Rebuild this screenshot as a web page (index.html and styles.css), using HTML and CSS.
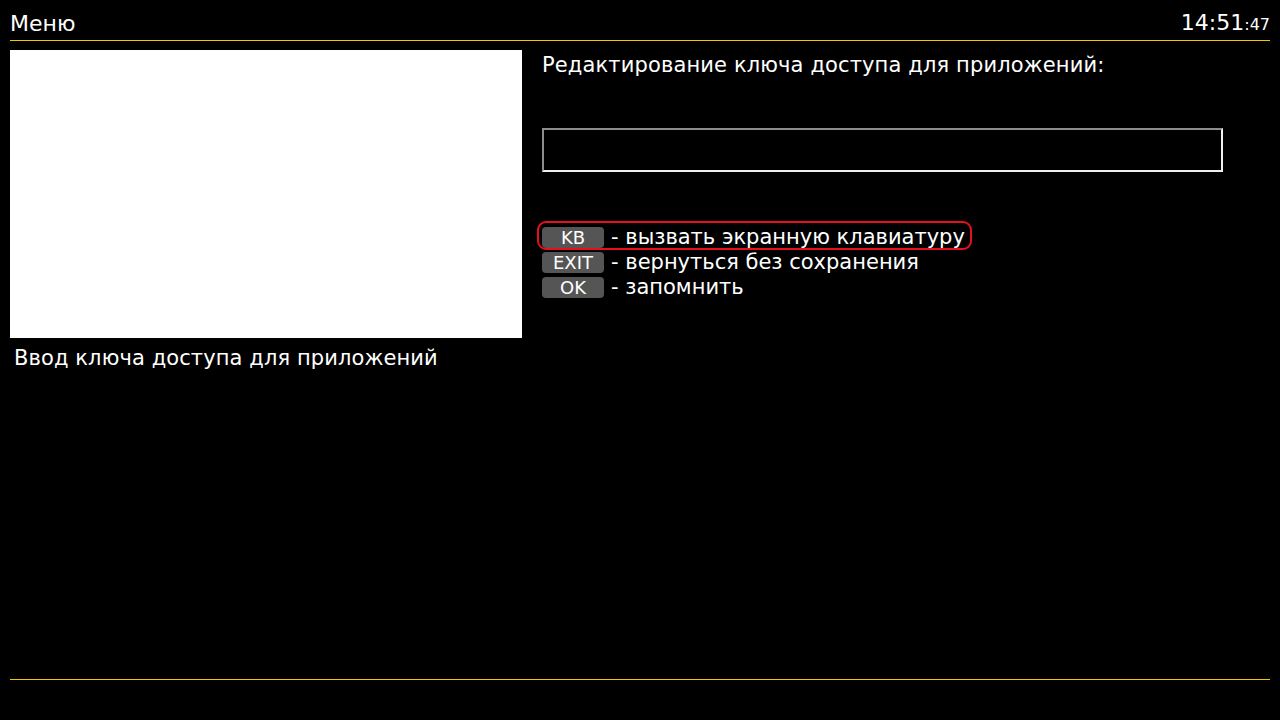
FILE: index.html
```html
<!DOCTYPE html>
<html lang="ru">
<head>
<meta charset="utf-8">
<title>Меню</title>
<link rel="stylesheet" href="styles.css">
</head>
<body>
<div class="page">
  <header class="topbar">
    <div class="title">Меню</div>
    <div class="clock">14:51<span class="sec">:47</span></div>
  </header>
  <main class="content">
    <section class="left">
      <div class="preview"></div>
      <div class="caption">Ввод ключа доступа для приложений</div>
    </section>
    <section class="right">
      <div class="heading">Редактирование ключа доступа для приложений:</div>
      <div class="input"></div>
      <ul class="keys">
        <li class="key-row highlighted"><span class="key">KB</span><span class="desc">- вызвать экранную клавиатуру</span><span class="mark"></span></li>
        <li class="key-row"><span class="key">EXIT</span><span class="desc">- вернуться без сохранения</span></li>
        <li class="key-row"><span class="key">OK</span><span class="desc">- запомнить</span></li>
      </ul>
    </section>
  </main>
  <footer class="bottombar"></footer>
</div>
</body>
</html>
```
FILE: styles.css
```css
html, body {
  margin: 0;
  padding: 0;
  background: #000;
}
body {
  font-family: "DejaVu Sans", "Noto Sans", sans-serif;
  color: #fff;
}
.page {
  width: 1260px;
  height: 720px;
  padding: 0 10px;
  display: flex;
  flex-direction: column;
}
.topbar {
  height: 41px;
  border-bottom: 1px solid #f0c800;
  display: flex;
  justify-content: space-between;
  align-items: center;
  font-size: 22px;
  line-height: 24px;
  padding-top: 8px;
  box-sizing: border-box;
}
.clock .sec {
  font-size: 16px;
}
.content {
  flex: 1;
  display: flex;
  padding-top: 9px;
  border-bottom: 1px solid #f0c800;
  height: 639px;
  box-sizing: border-box;
}
.left {
  width: 512px;
}
.preview {
  width: 512px;
  height: 288px;
  background: #fff;
}
.caption {
  font-size: 21px;
  letter-spacing: 0.1px;
  padding-left: 4px;
  margin-top: 7px;
  line-height: 26px;
}
.right {
  margin-left: 20px;
  flex: 1;
}
.heading {
  font-size: 21px;
  letter-spacing: 0.13px;
  line-height: 26px;
  margin-top: 2px;
}
.input {
  width: 677px;
  height: 40px;
  margin-top: 50px;
  border-top: 2px solid #8c8c8c;
  border-left: 2px solid #8c8c8c;
  border-bottom: 2px solid #f0f0f0;
  border-right: 2px solid #f0f0f0;
}
.keys {
  list-style: none;
  margin: 53px 0 0;
  padding: 0;
}
.key-row {
  display: flex;
  align-items: center;
  height: 25px;
  position: relative;
}
.key {
  width: 62px;
  height: 21px;
  background: #555;
  border-radius: 4px;
  font-size: 18px;
  line-height: 22px;
  text-align: center;
  color: #fff;
}
.desc {
  margin-left: 7px;
  font-size: 21px;
  line-height: 25px;
}
.mark {
  position: absolute;
  left: -5px;
  top: -4px;
  width: 431px;
  height: 25px;
  border: 2px solid #e8101c;
  border-radius: 9px;
}
.bottombar {
  height: 40px;
}
```
